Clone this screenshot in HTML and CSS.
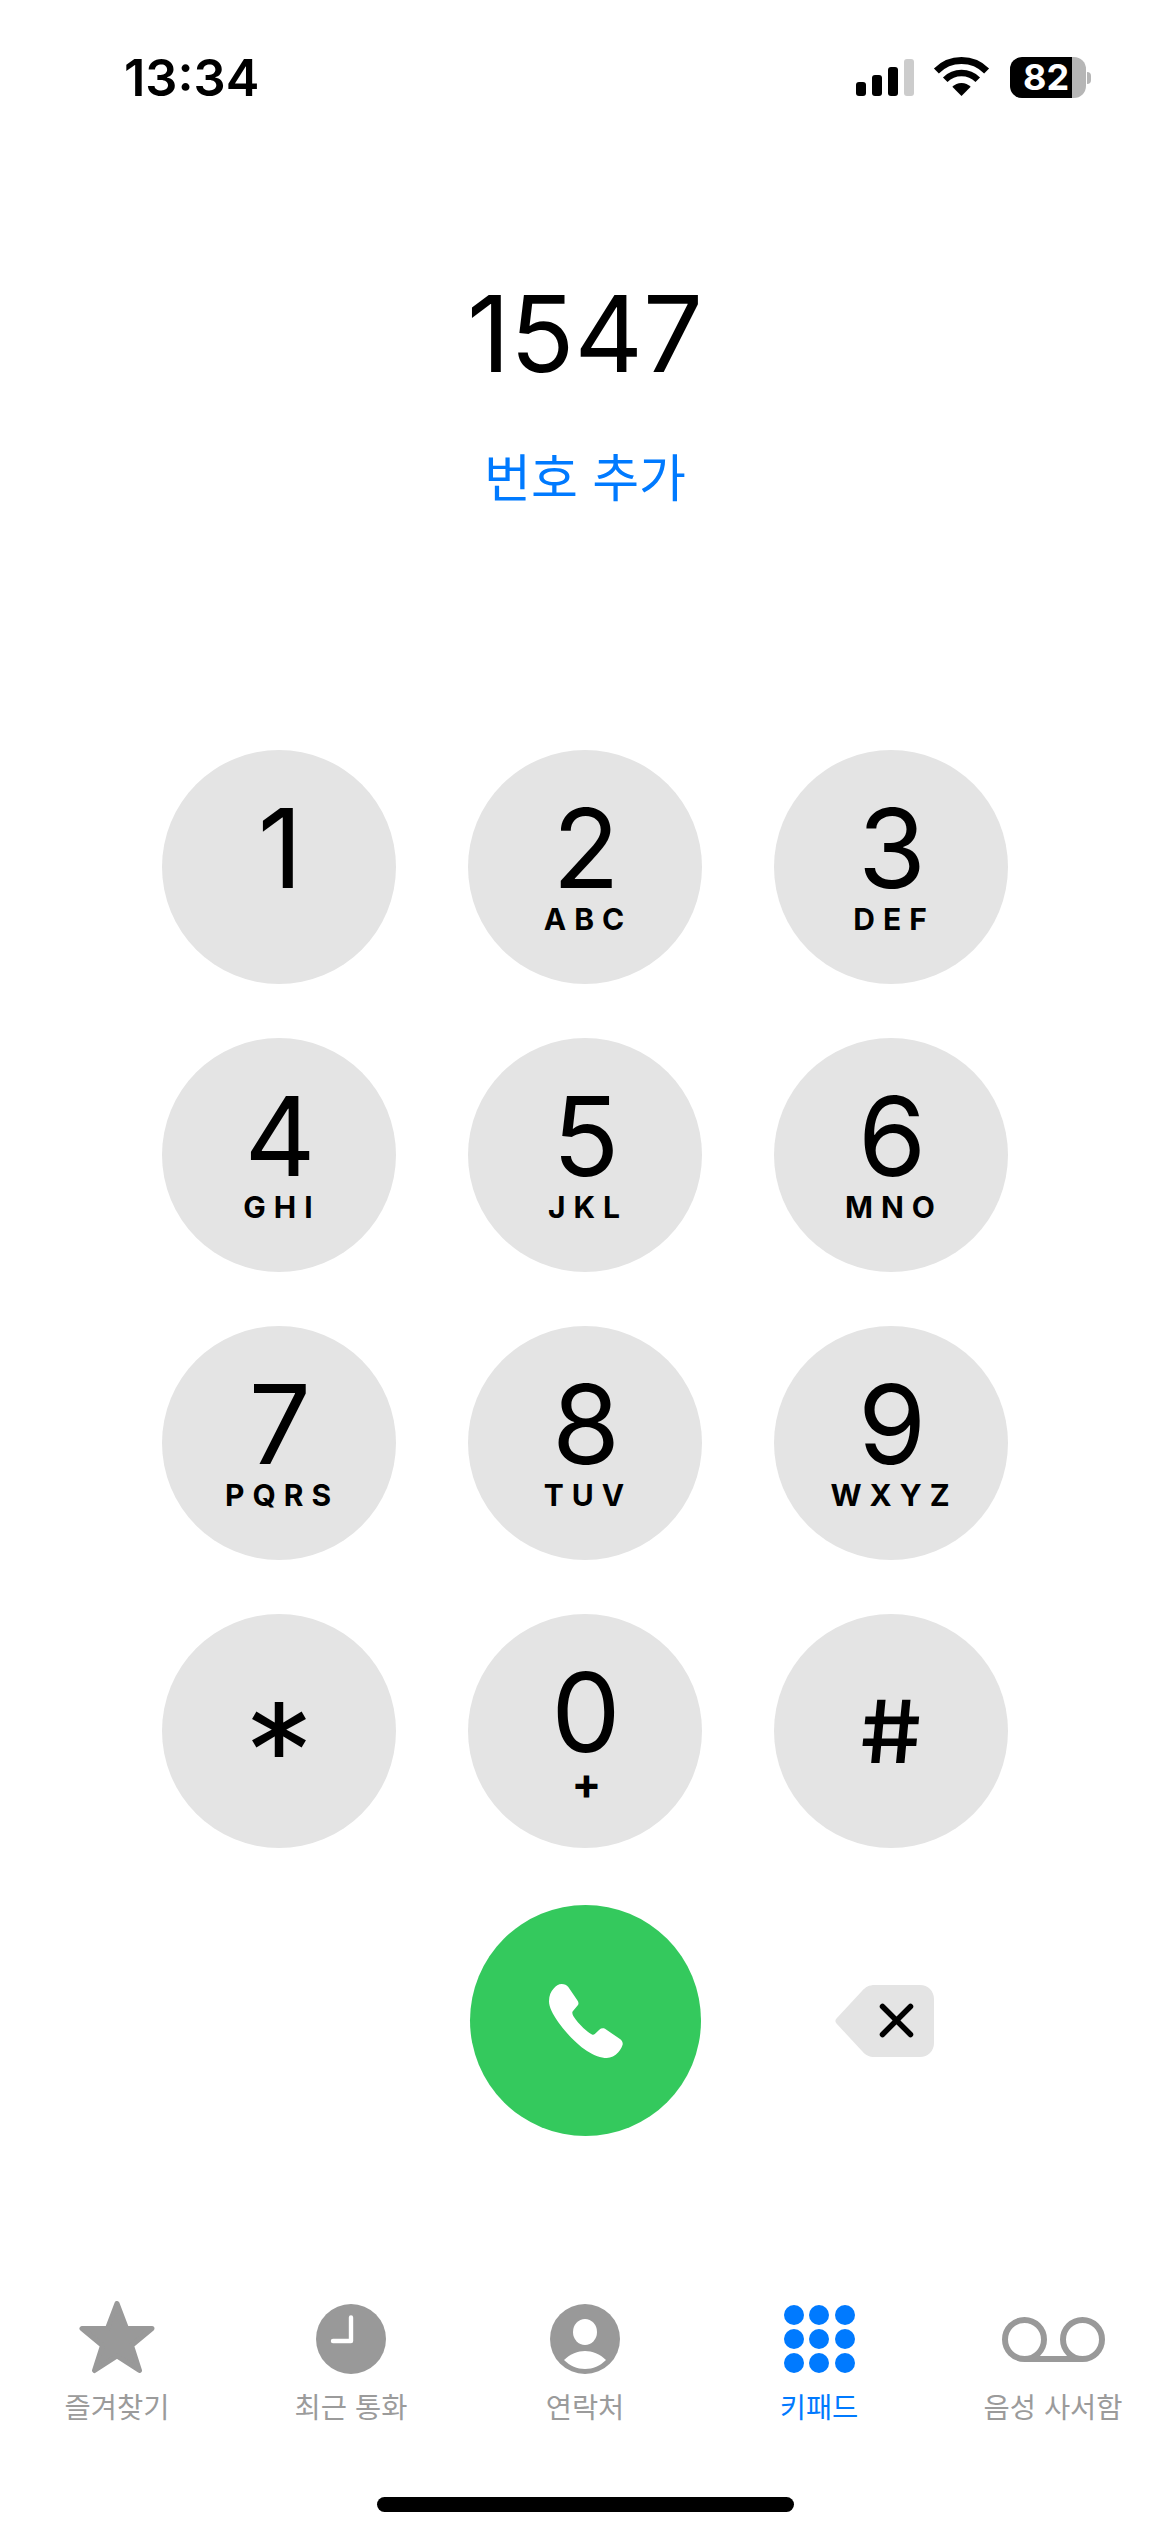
FILE: index.html
```html
<!DOCTYPE html>
<html lang="ko">
<head>
  <meta charset="UTF-8">
  <title>키패드</title>
  <link rel="stylesheet" href="styles.css">
</head>
<body>
  <div class="status-bar">
    <span class="time">13:34</span>
    <div class="status-icons">
      <div class="signal">
        <span class="bar bar-1"></span>
        <span class="bar bar-2"></span>
        <span class="bar bar-3"></span>
        <span class="bar bar-4 bar-off"></span>
      </div>
      <svg class="wifi" viewBox="0 0 49 39">
        <path d="M-0.6 13.9A35.5 35.5 0 0 1 49.6 13.9" fill="none" stroke="#000" stroke-width="7"/>
        <path d="M8.24 22.74A23 23 0 0 1 40.76 22.74" fill="none" stroke="#000" stroke-width="6.4"/>
        <path d="M24.5 39L15.3 29.8A13 13 0 0 1 33.7 29.8Z"/>
      </svg>
      <div class="battery">
        <div class="battery-body">82</div>
        <span class="battery-cap"></span>
      </div>
    </div>
  </div>

  <div class="dialed">
    <div class="number">1547</div>
    <a class="add-number">번호 추가</a>
  </div>

  <div class="keypad">
    <div class="key"><span class="digit">1</span></div>
    <div class="key"><span class="digit">2</span><span class="letters">ABC</span></div>
    <div class="key"><span class="digit">3</span><span class="letters">DEF</span></div>
    <div class="key"><span class="digit">4</span><span class="letters">GHI</span></div>
    <div class="key"><span class="digit">5</span><span class="letters">JKL</span></div>
    <div class="key"><span class="digit">6</span><span class="letters">MNO</span></div>
    <div class="key"><span class="digit">7</span><span class="letters">PQRS</span></div>
    <div class="key"><span class="digit">8</span><span class="letters">TUV</span></div>
    <div class="key"><span class="digit">9</span><span class="letters">WXYZ</span></div>
    <div class="key key-symbol"><span class="star-sign">*</span></div>
    <div class="key"><span class="digit">0</span><span class="letters plus">+</span></div>
    <div class="key key-symbol"><span class="hash-sign">#</span></div>
  </div>

  <div class="call-row">
    <div class="call-btn">
      <svg class="phone" viewBox="0 0 74 74">
        <path d="M12.7 0C15.5 0 17.8 1 19.3 3L28.3 16.3C29.6 18 29.8 19.5 29 21L23.6 27.5C23 28.5 23.4 30.5 24.3 32C27 36.5 31 40.5 34.3 44C37.5 47 41 49.5 43 50.5C44 51 45 50.7 45.8 50L50.3 45.7C52 44.3 54 44 56 44.8L71 55C73.3 56.8 74.2 59 73.5 61C72.5 64 71 66.5 69.3 68.3C66 72 62 74 57.7 74C52 74 45 71.5 38 67C28 60.5 17 49 9.5 38.5C3.5 30 0 23 0 17.3C0 11.5 2 7.5 4.5 4.8C6.8 2 9.7 0 12.7 0Z" fill="#fff"/>
      </svg>
    </div>
    <svg class="backspace" viewBox="0 0 99 72">
      <path d="M1.5 33.5L27 6C30.5 2 34 0 40 0H85C93 0 99 6 99 14V58C99 66 93 72 85 72H40C34 72 30.5 70 27 66L1.5 38.5C0 37 0 35 1.5 33.5Z" fill="#e4e4e4"/>
      <path d="M47.5 21.5L75.5 49.5M75.5 21.5L47.5 49.5" fill="none" stroke="#000" stroke-width="5.5" stroke-linecap="round"/>
    </svg>
  </div>

  <div class="tab-bar">
    <div class="tab">
      <div class="tab-icon">
        <svg class="ic-star" viewBox="0 0 76 73">
          <path d="M38 2.5L47.5 27.5H73L52.5 44.5L60.5 69.5L38 55L15.5 69.5L23.5 44.5L3 27.5H28.5Z" fill="#999" stroke="#999" stroke-width="5" stroke-linejoin="round"/>
        </svg>
      </div>
      <span class="tab-label">즐겨찾기</span>
    </div>
    <div class="tab">
      <div class="tab-icon">
        <svg class="ic-round" viewBox="0 0 70 70">
          <circle cx="35" cy="35" r="35" fill="#999"/>
          <path d="M35 13.5V37H17" fill="none" stroke="#fff" stroke-width="4.4" stroke-linecap="round" stroke-linejoin="round"/>
        </svg>
      </div>
      <span class="tab-label">최근 통화</span>
    </div>
    <div class="tab">
      <div class="tab-icon">
        <svg class="ic-round" viewBox="0 0 70 70">
          <circle cx="35" cy="35" r="35" fill="#999"/>
          <ellipse cx="35" cy="28" rx="12" ry="13" fill="#fff"/>
          <path d="M14 56C20 50 28 47 35 47C42 47 50 50 56 56C50 62 43 65 35 65C27 65 20 62 14 56Z" fill="#fff"/>
        </svg>
      </div>
      <span class="tab-label">연락처</span>
    </div>
    <div class="tab tab-active">
      <div class="tab-icon">
        <div class="dots">
          <span></span><span></span><span></span>
          <span></span><span></span><span></span>
          <span></span><span></span><span></span>
        </div>
      </div>
      <span class="tab-label">키패드</span>
    </div>
    <div class="tab">
      <div class="tab-icon">
        <svg class="ic-voicemail" viewBox="0 0 103 45">
          <circle cx="22.5" cy="22.5" r="19.5" fill="none" stroke="#999" stroke-width="6"/>
          <circle cx="80.5" cy="22.5" r="19.5" fill="none" stroke="#999" stroke-width="6"/>
          <path d="M22.5 42H80.5" stroke="#999" stroke-width="6"/>
        </svg>
      </div>
      <span class="tab-label">음성 사서함</span>
    </div>
  </div>

  <div class="home-indicator"></div>
</body>
</html>
```

FILE: styles.css
```css
body {
  margin: 0;
  width: 1170px;
  height: 2532px;
  overflow: hidden;
  background: #fff;
  color: #000;
  font-family: Inter, "Noto Sans CJK KR", sans-serif;
}

/* Status bar */
.status-bar {
  height: 130px;
  box-sizing: border-box;
  padding: 57px 79px 0 124px;
  display: flex;
  justify-content: space-between;
  align-items: flex-start;
}
.time {
  margin-top: 2px;
  font-size: 50.5px;
  line-height: 38px;
  font-weight: 600;
}
.status-icons {
  display: flex;
  align-items: flex-start;
}
.signal {
  height: 37px;
  margin-top: 2px;
  display: flex;
  align-items: flex-end;
  gap: 6px;
}
.bar {
  width: 10px;
  border-radius: 3px;
  background: #000;
}
.bar-1 { height: 14px; }
.bar-2 { height: 21px; }
.bar-3 { height: 29px; }
.bar-4 { height: 37px; }
.bar-off { background: #ccc; }
.wifi {
  width: 49px;
  height: 39px;
  margin: 0 24px 0 23px;
  overflow: visible;
}
.battery {
  height: 41px;
  display: flex;
  align-items: center;
  gap: 1px;
}
.battery-body {
  width: 76px;
  height: 41px;
  box-sizing: border-box;
  padding-left: 13px;
  border-radius: 12px;
  background: linear-gradient(90deg, #000 81.5%, #b6b6b6 81.5%);
  color: #fff;
  font-size: 36px;
  font-weight: 700;
  line-height: 41px;
}
.battery-cap {
  width: 4px;
  height: 12px;
  border-radius: 0 5px 5px 0;
  background: #b6b6b6;
}

/* Dialed number */
.dialed {
  height: 620px;
  box-sizing: border-box;
  padding-top: 165px;
  display: flex;
  flex-direction: column;
  align-items: center;
}
.number {
  font-size: 106px;
  line-height: 77px;
  font-weight: 400;
}
.add-number {
  margin-top: 80px;
  font-size: 51px;
  line-height: 54px;
  color: #007aff;
}

/* Keypad */
.keypad {
  display: grid;
  grid-template-columns: repeat(3, 234px);
  grid-auto-rows: 234px;
  gap: 54px 72px;
  justify-content: center;
}
.key {
  box-sizing: border-box;
  padding-top: 58px;
  border-radius: 50%;
  background: #e4e4e4;
  display: flex;
  flex-direction: column;
  align-items: center;
}
.digit {
  padding-left: 2px;
  font-size: 110px;
  line-height: 80px;
  font-weight: 400;
}
.letters {
  margin-top: 20px;
  font-size: 30px;
  line-height: 22px;
  font-weight: 700;
  letter-spacing: 8px;
  margin-right: -6px;
}
.plus {
  font-size: 44px;
  letter-spacing: 0;
  margin-right: -3px;
}
.key-symbol {
  padding-top: 0;
  justify-content: center;
}
.star-sign {
  font-family: "DejaVu Sans", sans-serif;
  font-size: 116px;
  line-height: 110px;
  margin-top: 36px;
  -webkit-text-stroke: 2px #000;
}
.hash-sign {
  display: inline-block;
  font-size: 87px;
  line-height: 65px;
  font-weight: 500;
  transform: skewX(5deg) scaleX(1.12);
}

/* Call row */
.call-row {
  margin-top: 57px;
  padding-left: 470px;
  display: flex;
  align-items: center;
}
.call-btn {
  width: 231px;
  height: 231px;
  border-radius: 50%;
  background: #34c95d;
  display: flex;
  align-items: center;
  justify-content: center;
}
.phone {
  width: 74px;
  height: 74px;
}
.backspace {
  width: 99px;
  height: 72px;
  margin-left: 134px;
}

/* Tab bar */
.tab-bar {
  margin-top: 164px;
  display: grid;
  grid-template-columns: repeat(5, 234px);
}
.tab {
  display: flex;
  flex-direction: column;
  align-items: center;
  color: #9b9b9b;
}
.tab-icon {
  height: 74px;
  display: flex;
  align-items: flex-end;
}
.tab-label {
  margin-top: 18px;
  font-size: 28.5px;
  line-height: 32px;
}
.tab-active { color: #007aff; }
.ic-star {
  width: 76px;
  height: 73px;
}
.ic-round {
  width: 70px;
  height: 70px;
}
.ic-voicemail {
  width: 103px;
  height: 45px;
  margin-bottom: 12px;
}
.dots {
  display: grid;
  grid-template-columns: repeat(3, 20px);
  grid-auto-rows: 20px;
  gap: 4px 5.5px;
  margin-bottom: 1px;
}
.dots span {
  border-radius: 50%;
  background: #007aff;
}

/* Home indicator */
.home-indicator {
  width: 417px;
  height: 15px;
  margin: 73px auto 0;
  border-radius: 8px;
  background: #000;
}
```
